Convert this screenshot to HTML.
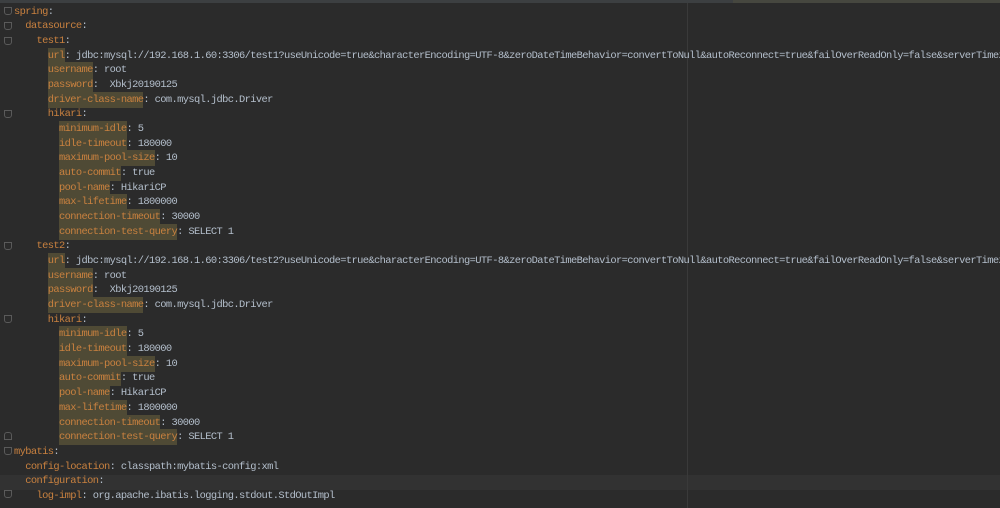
<!DOCTYPE html>
<html><head><meta charset="utf-8"><style>
html,body{margin:0;padding:0;background:#2b2b2b;width:1000px;height:508px;overflow:hidden}
.top{position:absolute;left:0;top:0;width:1000px;height:3px;background:#3c3f41}
.top2{position:absolute;left:733px;top:0;width:267px;height:3px;background:#46473f}
.margin{position:absolute;left:687px;top:3px;width:1px;height:505px;background:#3a3a3a}
.cur{position:absolute;left:0;top:475px;width:1000px;height:14.67px;background:#323232}
#code{position:absolute;left:14px;top:4.7px;font-family:"Liberation Mono",monospace;font-size:10.4px;letter-spacing:-0.61px;line-height:14.67px;color:#b4bfcc;white-space:pre}
.k{color:#c9813f}
.h{color:#c9813f;background:#4f4a35;padding:2px 0}
.g{position:absolute;left:4px;width:6px;height:6px;border:1px solid #5a5a5a;border-radius:0 0 3px 3px}
</style></head><body>
<div class="top"></div><div class="top2"></div>
<div class="cur"></div>
<div class="margin"></div>
<div class="g" style="top:7px"></div>
<div class="g" style="top:22px"></div>
<div class="g" style="top:37px"></div>
<div class="g" style="top:110px"></div>
<div class="g" style="top:242px"></div>
<div class="g" style="top:315px"></div>
<div class="g" style="top:432px;border-radius:3px 3px 0 0"></div>
<div class="g" style="top:447px"></div>
<div class="g" style="top:490px"></div>
<div id="code"><span class="k">spring</span>:
  <span class="k">datasource</span>:
    <span class="k">test1</span>:
      <span class="h">url</span>: jdbc:mysql://192.168.1.60:3306/test1?useUnicode=true&amp;characterEncoding=UTF-8&amp;zeroDateTimeBehavior=convertToNull&amp;autoReconnect=true&amp;failOverReadOnly=false&amp;serverTimezone=GMT
      <span class="h">username</span>: root
      <span class="h">password</span>:  Xbkj20190125
      <span class="h">driver-class-name</span>: com.mysql.jdbc.Driver
      <span class="k">hikari</span>:
        <span class="h">minimum-idle</span>: 5
        <span class="h">idle-timeout</span>: 180000
        <span class="h">maximum-pool-size</span>: 10
        <span class="h">auto-commit</span>: true
        <span class="h">pool-name</span>: HikariCP
        <span class="h">max-lifetime</span>: 1800000
        <span class="h">connection-timeout</span>: 30000
        <span class="h">connection-test-query</span>: SELECT 1
    <span class="k">test2</span>:
      <span class="h">url</span>: jdbc:mysql://192.168.1.60:3306/test2?useUnicode=true&amp;characterEncoding=UTF-8&amp;zeroDateTimeBehavior=convertToNull&amp;autoReconnect=true&amp;failOverReadOnly=false&amp;serverTimezone=GMT
      <span class="h">username</span>: root
      <span class="h">password</span>:  Xbkj20190125
      <span class="h">driver-class-name</span>: com.mysql.jdbc.Driver
      <span class="k">hikari</span>:
        <span class="h">minimum-idle</span>: 5
        <span class="h">idle-timeout</span>: 180000
        <span class="h">maximum-pool-size</span>: 10
        <span class="h">auto-commit</span>: true
        <span class="h">pool-name</span>: HikariCP
        <span class="h">max-lifetime</span>: 1800000
        <span class="h">connection-timeout</span>: 30000
        <span class="h">connection-test-query</span>: SELECT 1
<span class="k">mybatis</span>:
  <span class="k">config-location</span>: classpath:mybatis-config:xml
  <span class="k">configuration</span>:
    <span class="k">log-impl</span>: org.apache.ibatis.logging.stdout.StdOutImpl</div>
</body></html>
